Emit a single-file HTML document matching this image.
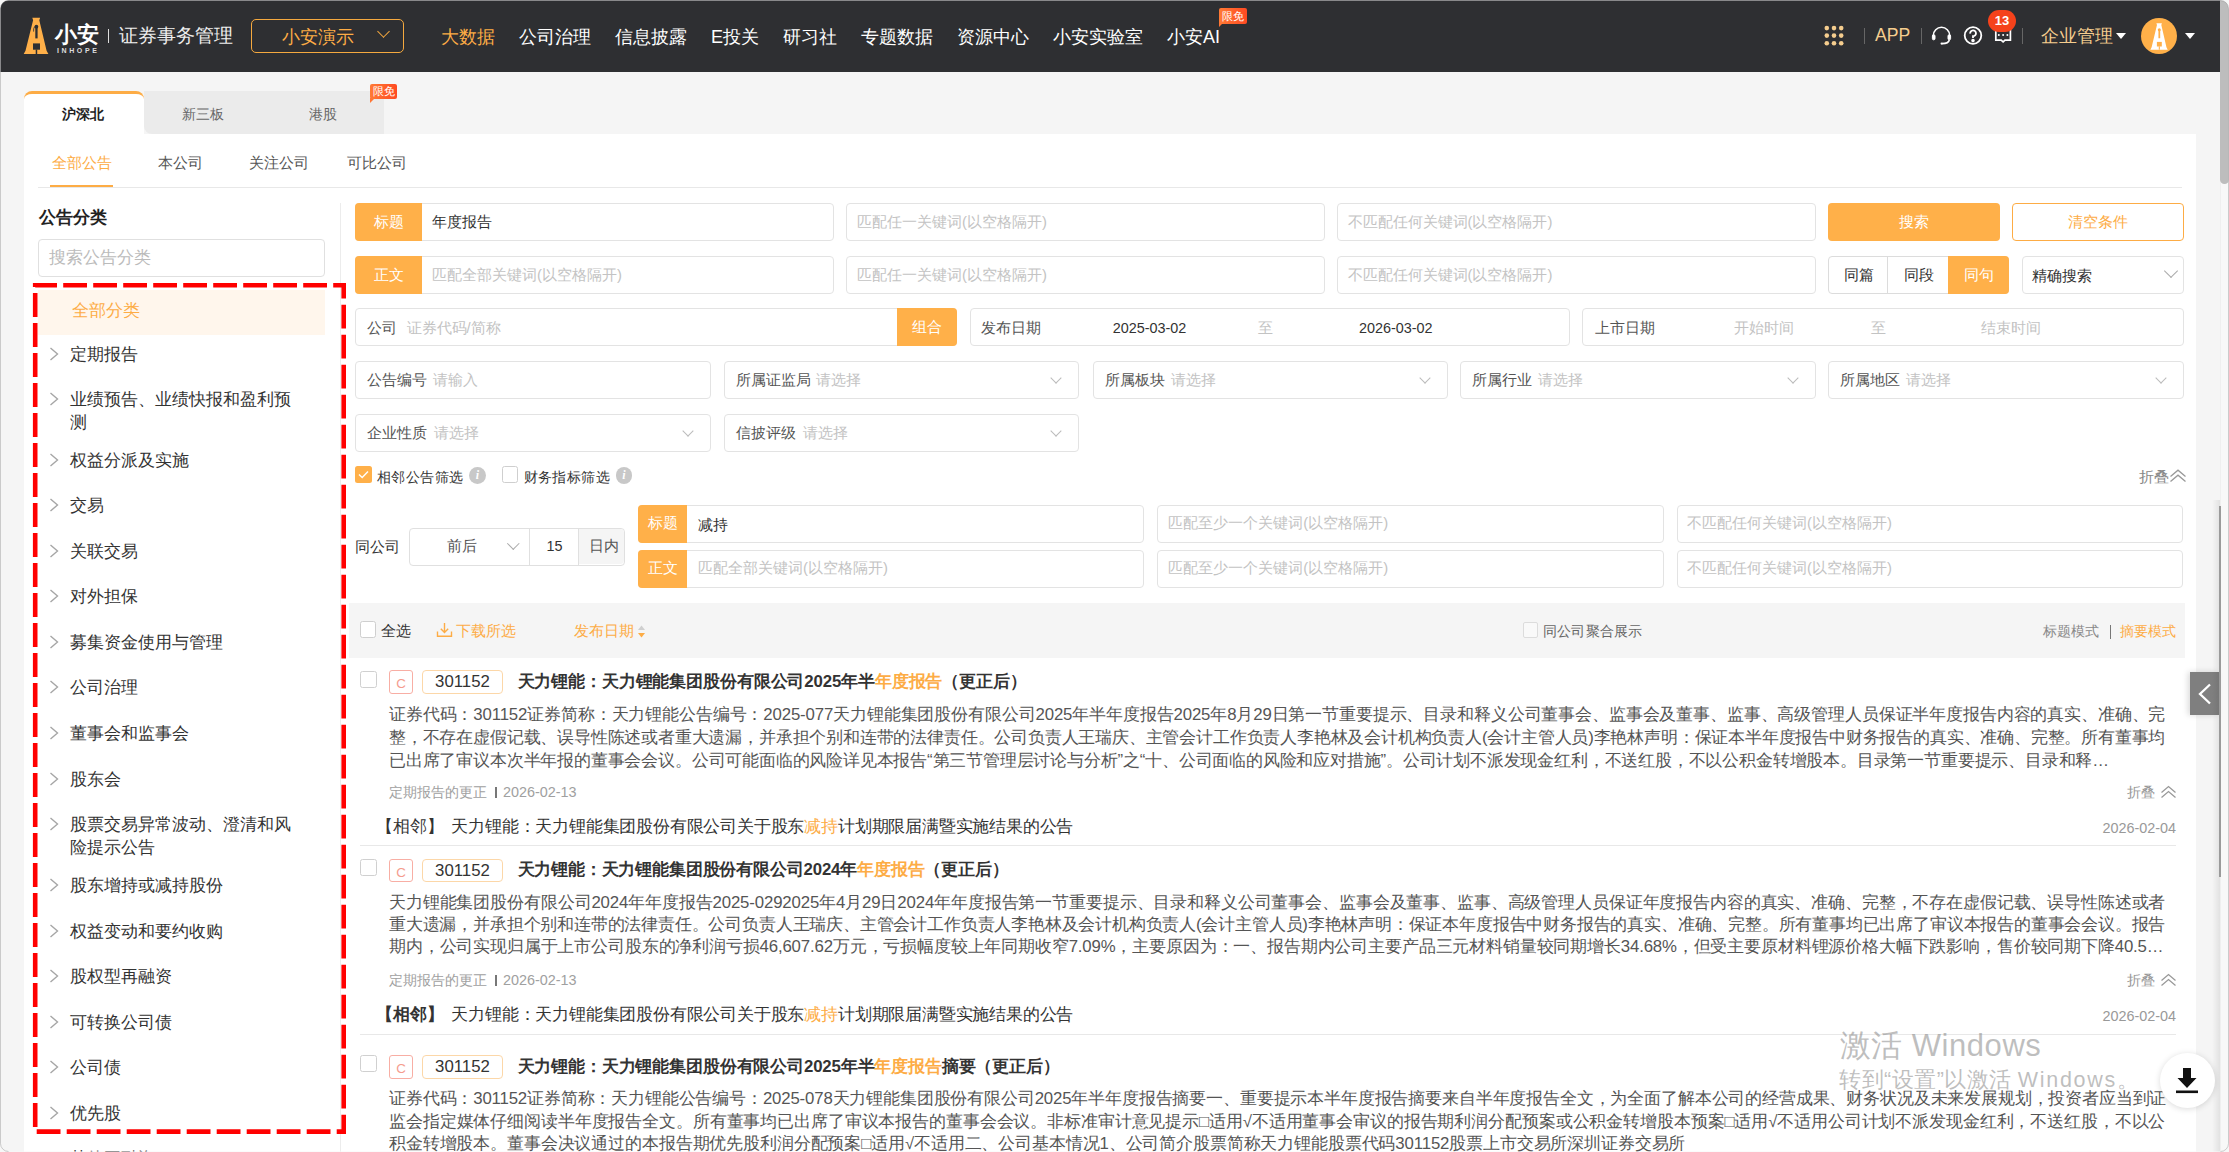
<!DOCTYPE html>
<html><head><meta charset="utf-8"><title>小安</title>
<style>
*{box-sizing:border-box;margin:0;padding:0}
html,body{width:2229px;height:1152px;overflow:hidden}
body{position:relative;background:#f5f5f5;font-family:"Liberation Sans",sans-serif;color:#333}
.a{position:absolute;white-space:nowrap}
.hdr{left:0;top:0;width:2220px;height:72px;background:#2e2f32}
.nav{top:22.5px;font-size:18px;line-height:28px;color:#fff}
.sep{width:1px;height:16px;background:#666;top:28px}
.panel{left:24px;top:134px;width:2172px;height:1018px;background:#fff}
.box{border:1px solid #e3e3e3;border-radius:4px;background:#fff}
.ph{color:#c3c3c3}
.lbl{color:#555}
.f14{font-size:14.8px;line-height:20px}
.f17{font-size:16.8px;line-height:23px}
.org{color:#fdac45}
.obg{background:#ffb049;color:#fff}
.chev{width:8px;height:8px;border-right:1.3px solid #aaa;border-bottom:1.3px solid #aaa;transform:rotate(-45deg)}
.dchev{width:8px;height:8px;border-right:1.2px solid #bbb;border-bottom:1.2px solid #bbb;transform:rotate(45deg)}
.tr{color:#333;font-size:16.8px;line-height:23px}
.tri{width:0;height:0;border-left:5px solid transparent;border-right:5px solid transparent;border-top:6px solid #fff}
</style></head><body>
<!-- HEADER -->
<div class="a hdr"></div>
<!-- logo -->
<svg class="a" style="left:20px;top:14px" width="32" height="44" viewBox="0 0 32 44">
<path d="M12.3 3.8 L20.1 3.8 L19.3 6.2 L26.6 36.8 L28.4 40 L3.7 40 L5.5 36.8 L13.1 6.2 Z" fill="#ffb049"/>
<circle cx="16.4" cy="12.7" r="1.9" fill="#2e2f32"/>
<rect x="15.3" y="13" width="2.3" height="11.4" fill="#2e2f32"/>
<path d="M14.6 12.6 Q13.3 14.5 13.6 17.6" stroke="#2e2f32" stroke-width="0.8" fill="none"/>
<rect x="13" y="29.4" width="7" height="6.3" fill="#2e2f32"/>
<rect x="15.7" y="35.5" width="1.5" height="4.6" fill="#2e2f32"/>
</svg>
<div class="a" style="left:54.5px;top:20.5px;font-size:22px;line-height:28px;font-weight:bold;color:#fff">小安</div>
<div class="a" style="left:57px;top:46px;font-size:7px;line-height:9px;font-weight:bold;color:#ddd;letter-spacing:2.6px">INHOPE</div>
<div class="a" style="left:108px;top:29px;width:1px;height:14px;background:#ddd"></div>
<div class="a" style="left:118.5px;top:22px;font-size:19.2px;line-height:28px;color:#eee">证券事务管理</div>
<div class="a" style="left:251px;top:19px;width:153px;height:34px;border:1.5px solid #f5a93f;border-radius:5px"></div>
<div class="a org" style="left:281.5px;top:23px;font-size:18px;line-height:28px">小安演示</div>
<div class="a" style="left:379px;top:27px;width:9px;height:9px;border-right:1.5px solid #f5a93f;border-bottom:1.5px solid #f5a93f;transform:rotate(45deg)"></div>
<div class="a nav org" style="left:441px">大数据</div>
<div class="a nav" style="left:519px">公司治理</div>
<div class="a nav" style="left:615px">信息披露</div>
<div class="a nav" style="left:711px">E投关</div>
<div class="a nav" style="left:783px">研习社</div>
<div class="a nav" style="left:861px">专题数据</div>
<div class="a nav" style="left:957px">资源中心</div>
<div class="a nav" style="left:1053px">小安实验室</div>
<div class="a nav" style="left:1167px">小安AI</div>
<div class="a" style="left:1219px;top:8px;width:28px;height:16px;background:linear-gradient(90deg,#ff7a35,#ff4a22);border-radius:2px;color:#fff;font-size:11px;line-height:16px;text-align:center">限免</div>
<div class="a" style="left:1219px;top:22px;width:0;height:0;border-left:5px solid #ff7635;border-bottom:5px solid transparent"></div>
<!-- right header -->
<svg class="a" style="left:1822px;top:24px" width="24" height="24" viewBox="0 0 24 24" fill="#f5cd8e">
<circle cx="4.8" cy="4.1" r="2.3"/><circle cx="12" cy="4.1" r="2.3"/><circle cx="19.2" cy="4.1" r="2.3"/>
<circle cx="4.8" cy="11.6" r="2.3"/><circle cx="12" cy="11.6" r="2.3"/><circle cx="19.2" cy="11.6" r="2.3"/>
<circle cx="4.8" cy="19.2" r="2.3"/><circle cx="12" cy="19.2" r="2.3"/><circle cx="19.2" cy="19.2" r="2.3"/>
</svg>
<div class="a sep" style="left:1864px"></div>
<div class="a" style="left:1875px;top:24px;font-size:17.6px;line-height:22px;color:#f5cd8e">APP</div>
<div class="a sep" style="left:1921px"></div>
<svg class="a" style="left:1930px;top:25px" width="24" height="22" viewBox="0 0 24 22" fill="none" stroke="#fff" stroke-width="1.6">
<path d="M3.3 11 V10.5 A8.2 8.2 0 0 1 19.7 10.5 V11"/><rect x="2.4" y="9.8" width="2.6" height="5" rx="1.2" fill="#fff" stroke-width="1"/><rect x="18" y="9.8" width="2.6" height="5" rx="1.2" fill="#fff" stroke-width="1"/><path d="M19.3 15 Q18.6 18.6 12 18.6"/><circle cx="11.6" cy="18.6" r="1.1" fill="#fff" stroke="none"/>
</svg>
<svg class="a" style="left:1963px;top:26px" width="20" height="20" viewBox="0 0 20 20" fill="none" stroke="#fff" stroke-width="1.8">
<circle cx="10" cy="9.5" r="8.3"/><path d="M7.2 7.6 A2.9 2.9 0 1 1 10 10.2 V12"/><circle cx="10" cy="14.6" r="0.9" fill="#fff"/>
</svg>
<svg class="a" style="left:1994px;top:26px" width="19" height="19" viewBox="0 0 19 19" fill="none" stroke="#fff" stroke-width="1.7">
<path d="M1.8 2.5 H16.4 V14.2 H11 L9.1 15.9 L7.2 14.2 H1.8 Z"/><circle cx="4.8" cy="9" r="1" fill="#fff" stroke="none"/><circle cx="9.1" cy="9" r="1" fill="#fff" stroke="none"/><circle cx="13.4" cy="9" r="1" fill="#fff" stroke="none"/>
</svg>
<div class="a" style="left:1988px;top:10px;width:28px;height:22px;border-radius:11px;background:#f5421b;color:#fff;font-size:13px;font-weight:bold;line-height:22px;text-align:center">13</div>
<div class="a sep" style="left:2022px"></div>
<div class="a" style="left:2041px;top:21.5px;font-size:18px;line-height:28px;color:#f5cd8e">企业管理</div>
<div class="a tri" style="left:2116px;top:33px"></div>
<div class="a" style="left:2141px;top:18px;width:36px;height:36px;border-radius:50%;background:#ffb049"></div>
<svg class="a" style="left:2150px;top:23px" width="18" height="27" viewBox="3.2 3.5 25.6 37" preserveAspectRatio="none">
<path d="M12.3 3.8 L20.1 3.8 L19.3 6.2 L26.6 36.8 L28.4 40 L3.7 40 L5.5 36.8 L13.1 6.2 Z" fill="#fff"/>
<circle cx="16.4" cy="12.7" r="2.1" fill="#ffb049"/>
<rect x="15.2" y="13" width="2.5" height="11.4" fill="#ffb049"/>
<rect x="13" y="29.4" width="7" height="6.3" fill="#ffb049"/>
<rect x="15.7" y="35.5" width="1.5" height="4.6" fill="#ffb049"/>
</svg>
<div class="a tri" style="left:2185px;top:33px"></div>
<!-- scrollbar -->
<div class="a" style="left:2220px;top:0;width:9px;height:1152px;background:#f8f8f8;border-left:1px solid #efefef"></div>
<div class="a" style="left:2220px;top:0;width:9px;height:184px;background:#bdbdbd;border-radius:0 0 5px 5px"></div>

<!-- TABS -->
<div class="a" style="left:144px;top:91px;width:240px;height:43px;background:#ebebeb;border-radius:0 8px 0 8px"></div>
<div class="a" style="left:24px;top:91px;width:120px;height:44px;background:#fff;border-top:3px solid #fdac45;border-radius:8px 8px 0 0"></div>
<div class="a" style="left:62px;top:103px;font-size:14.4px;line-height:22px;font-weight:bold;color:#222">沪深北</div>
<div class="a" style="left:182px;top:103px;font-size:14.4px;line-height:22px;color:#666">新三板</div>
<div class="a" style="left:309px;top:103px;font-size:14.4px;line-height:22px;color:#666">港股</div>
<div class="a" style="left:370px;top:84px;width:27px;height:15px;background:linear-gradient(90deg,#ff7a35,#ff4a22);border-radius:2px;color:#fff;font-size:11px;line-height:15px;text-align:center">限免</div>
<div class="a" style="left:370px;top:98px;width:0;height:0;border-left:5px solid #ff7635;border-bottom:5px solid transparent"></div>

<div class="a panel"></div>
<!-- sub tabs -->
<div class="a org" style="left:52px;top:153px;font-size:15.3px;line-height:20px">全部公告</div>
<div class="a" style="left:158px;top:153px;font-size:15.3px;line-height:20px;color:#555">本公司</div>
<div class="a" style="left:249px;top:153px;font-size:15.3px;line-height:20px;color:#555">关注公司</div>
<div class="a" style="left:347px;top:153px;font-size:15.3px;line-height:20px;color:#555">可比公司</div>
<div class="a" style="left:38px;top:187px;width:2144px;height:1px;background:#e8e8e8"></div>
<div class="a" style="left:50px;top:185px;width:63px;height:2.4px;background:#fdac45"></div>

<!--SIDEBAR-->
<div class="a" style="left:340px;top:203px;width:1px;height:949px;background:#ececec"></div>
<div class="a" style="left:39px;top:204px;font-size:16.8px;line-height:28px;font-weight:bold;color:#222">公告分类</div>
<div class="a box" style="left:38px;top:239px;width:287px;height:38px;border-color:#e0e0e0"></div>
<div class="a" style="left:49px;top:245px;font-size:16.8px;line-height:26px;color:#bbb">搜索公告分类</div>
<div class="a" style="left:38px;top:290px;width:287px;height:45px;background:#fff6ec"></div>
<div class="a org" style="left:72px;top:297px;font-size:16.8px;line-height:28px">全部分类</div>
<svg class="a" style="left:48px;top:346.2px" width="12" height="16" viewBox="0 0 12 16"><path d="M2.5 2 L9.5 8 L2.5 14" fill="none" stroke="#a6a6a6" stroke-width="1.4"/></svg>
<div class="a tr" style="left:70px;top:341.2px;line-height:28px">定期报告</div>
<svg class="a" style="left:48px;top:391.4px" width="12" height="16" viewBox="0 0 12 16"><path d="M2.5 2 L9.5 8 L2.5 14" fill="none" stroke="#a6a6a6" stroke-width="1.4"/></svg>
<div class="a tr" style="left:70px;top:386.4px;line-height:28px">业绩预告、业绩快报和盈利预</div>
<div class="a tr" style="left:70px;top:409.4px;line-height:28px">测</div>
<svg class="a" style="left:48px;top:451.7px" width="12" height="16" viewBox="0 0 12 16"><path d="M2.5 2 L9.5 8 L2.5 14" fill="none" stroke="#a6a6a6" stroke-width="1.4"/></svg>
<div class="a tr" style="left:70px;top:446.7px;line-height:28px">权益分派及实施</div>
<svg class="a" style="left:48px;top:497.0px" width="12" height="16" viewBox="0 0 12 16"><path d="M2.5 2 L9.5 8 L2.5 14" fill="none" stroke="#a6a6a6" stroke-width="1.4"/></svg>
<div class="a tr" style="left:70px;top:492.0px;line-height:28px">交易</div>
<svg class="a" style="left:48px;top:542.8px" width="12" height="16" viewBox="0 0 12 16"><path d="M2.5 2 L9.5 8 L2.5 14" fill="none" stroke="#a6a6a6" stroke-width="1.4"/></svg>
<div class="a tr" style="left:70px;top:537.8px;line-height:28px">关联交易</div>
<svg class="a" style="left:48px;top:588.1px" width="12" height="16" viewBox="0 0 12 16"><path d="M2.5 2 L9.5 8 L2.5 14" fill="none" stroke="#a6a6a6" stroke-width="1.4"/></svg>
<div class="a tr" style="left:70px;top:583.1px;line-height:28px">对外担保</div>
<svg class="a" style="left:48px;top:633.7px" width="12" height="16" viewBox="0 0 12 16"><path d="M2.5 2 L9.5 8 L2.5 14" fill="none" stroke="#a6a6a6" stroke-width="1.4"/></svg>
<div class="a tr" style="left:70px;top:628.7px;line-height:28px">募集资金使用与管理</div>
<svg class="a" style="left:48px;top:679.0px" width="12" height="16" viewBox="0 0 12 16"><path d="M2.5 2 L9.5 8 L2.5 14" fill="none" stroke="#a6a6a6" stroke-width="1.4"/></svg>
<div class="a tr" style="left:70px;top:674.0px;line-height:28px">公司治理</div>
<svg class="a" style="left:48px;top:724.8px" width="12" height="16" viewBox="0 0 12 16"><path d="M2.5 2 L9.5 8 L2.5 14" fill="none" stroke="#a6a6a6" stroke-width="1.4"/></svg>
<div class="a tr" style="left:70px;top:719.8px;line-height:28px">董事会和监事会</div>
<svg class="a" style="left:48px;top:770.6px" width="12" height="16" viewBox="0 0 12 16"><path d="M2.5 2 L9.5 8 L2.5 14" fill="none" stroke="#a6a6a6" stroke-width="1.4"/></svg>
<div class="a tr" style="left:70px;top:765.6px;line-height:28px">股东会</div>
<svg class="a" style="left:48px;top:816.3px" width="12" height="16" viewBox="0 0 12 16"><path d="M2.5 2 L9.5 8 L2.5 14" fill="none" stroke="#a6a6a6" stroke-width="1.4"/></svg>
<div class="a tr" style="left:70px;top:811.3px;line-height:28px">股票交易异常波动、澄清和风</div>
<div class="a tr" style="left:70px;top:834.3px;line-height:28px">险提示公告</div>
<svg class="a" style="left:48px;top:877.0px" width="12" height="16" viewBox="0 0 12 16"><path d="M2.5 2 L9.5 8 L2.5 14" fill="none" stroke="#a6a6a6" stroke-width="1.4"/></svg>
<div class="a tr" style="left:70px;top:872.0px;line-height:28px">股东增持或减持股份</div>
<svg class="a" style="left:48px;top:922.6px" width="12" height="16" viewBox="0 0 12 16"><path d="M2.5 2 L9.5 8 L2.5 14" fill="none" stroke="#a6a6a6" stroke-width="1.4"/></svg>
<div class="a tr" style="left:70px;top:917.6px;line-height:28px">权益变动和要约收购</div>
<svg class="a" style="left:48px;top:968.2px" width="12" height="16" viewBox="0 0 12 16"><path d="M2.5 2 L9.5 8 L2.5 14" fill="none" stroke="#a6a6a6" stroke-width="1.4"/></svg>
<div class="a tr" style="left:70px;top:963.2px;line-height:28px">股权型再融资</div>
<svg class="a" style="left:48px;top:1013.8px" width="12" height="16" viewBox="0 0 12 16"><path d="M2.5 2 L9.5 8 L2.5 14" fill="none" stroke="#a6a6a6" stroke-width="1.4"/></svg>
<div class="a tr" style="left:70px;top:1008.8px;line-height:28px">可转换公司债</div>
<svg class="a" style="left:48px;top:1059.4px" width="12" height="16" viewBox="0 0 12 16"><path d="M2.5 2 L9.5 8 L2.5 14" fill="none" stroke="#a6a6a6" stroke-width="1.4"/></svg>
<div class="a tr" style="left:70px;top:1054.4px;line-height:28px">公司债</div>
<svg class="a" style="left:48px;top:1105.0px" width="12" height="16" viewBox="0 0 12 16"><path d="M2.5 2 L9.5 8 L2.5 14" fill="none" stroke="#a6a6a6" stroke-width="1.4"/></svg>
<div class="a tr" style="left:70px;top:1100.0px;line-height:28px">优先股</div>
<svg class="a" style="left:48px;top:1150.6px" width="12" height="16" viewBox="0 0 12 16"><path d="M2.5 2 L9.5 8 L2.5 14" fill="none" stroke="#a6a6a6" stroke-width="1.4"/></svg>
<div class="a tr" style="left:70px;top:1144.6px;line-height:28px">其他再融资</div>
<svg class="a" style="left:0;top:0" width="400" height="1152"><rect x="35.2" y="285.3" width="308.5" height="846.3" fill="none" stroke="#f00" stroke-width="4.6" stroke-dasharray="23.8 6.2" stroke-dashoffset="2"/></svg>
<!--MAIN-->
<div class="a box" style="left:355px;top:203px;width:478.5px;height:38px;"></div>
<div class="a obg f14" style="left:355px;top:203px;width:67px;height:38px;line-height:38px;text-align:center;border-radius:4px 0 0 4px">标题</div>
<div class="a f14" style="left:432px;top:203px;line-height:38px;color:#333">年度报告</div>
<div class="a box" style="left:846px;top:203px;width:478.5px;height:38px;"></div>
<div class="a f14 ph" style="left:857px;top:203px;line-height:38px;">匹配任一关键词(以空格隔开)</div>
<div class="a box" style="left:1337px;top:203px;width:478.5px;height:38px;"></div>
<div class="a f14 ph" style="left:1347.5px;top:203px;line-height:38px;">不匹配任何关键词(以空格隔开)</div>
<div class="a obg f14" style="left:1828px;top:203px;width:172px;height:38px;line-height:38px;text-align:center;border-radius:4px">搜索</div>
<div class="a org f14" style="left:2012px;top:203px;width:172px;height:38px;line-height:36px;text-align:center;border-radius:4px;border:1px solid #fdac45;background:#fff">清空条件</div>
<div class="a box" style="left:355px;top:255.6px;width:478.5px;height:38px;"></div>
<div class="a obg f14" style="left:355px;top:255.6px;width:67px;height:38px;line-height:38px;text-align:center;border-radius:4px 0 0 4px">正文</div>
<div class="a f14 ph" style="left:432px;top:255.6px;line-height:38px;">匹配全部关键词(以空格隔开)</div>
<div class="a box" style="left:846px;top:255.6px;width:478.5px;height:38px;"></div>
<div class="a f14 ph" style="left:857px;top:255.6px;line-height:38px;">匹配任一关键词(以空格隔开)</div>
<div class="a box" style="left:1337px;top:255.6px;width:478.5px;height:38px;"></div>
<div class="a f14 ph" style="left:1347.5px;top:255.6px;line-height:38px;">不匹配任何关键词(以空格隔开)</div>
<div class="a box" style="left:1828px;top:255.6px;width:180.6px;height:38px;border-color:#dcdcdc"></div>
<div class="a" style="left:1887.4px;top:255.6px;width:1px;height:38px;background:#dcdcdc"></div>
<div class="a obg" style="left:1948px;top:255.6px;width:60.6px;height:38px;border-radius:0 4px 4px 0"></div>
<div class="a f14" style="left:1843.8px;top:255.6px;line-height:38px;color:#333">同篇</div>
<div class="a f14" style="left:1903.8px;top:255.6px;line-height:38px;color:#333">同段</div>
<div class="a f14" style="left:1963.6px;top:255.6px;line-height:38px;color:#fff">同句</div>
<div class="a box" style="left:2021.5px;top:255.6px;width:162.2px;height:38px;"></div>
<div class="a f14" style="left:2031.6px;top:256.6px;line-height:38px;color:#333">精确搜索</div>
<div class="a" style="left:2166px;top:265.6px;width:10px;height:10px;border-right:1.3px solid #aaa;border-bottom:1.3px solid #aaa;transform:rotate(45deg)"></div>
<div class="a box" style="left:355px;top:308.4px;width:602px;height:38px;"></div>
<div class="a f14 lbl" style="left:367px;top:309.2px;line-height:38px;">公司</div>
<div class="a f14 ph" style="left:406.5px;top:309.2px;line-height:38px;">证券代码/简称</div>
<div class="a obg f14" style="left:897px;top:308.4px;width:60px;height:38px;line-height:38px;text-align:center;border-radius:0 4px 4px 0">组合</div>
<div class="a box" style="left:969.5px;top:308.4px;width:600px;height:38px;"></div>
<div class="a f14 lbl" style="left:980.7px;top:309.2px;line-height:38px;">发布日期</div>
<div class="a f14" style="left:1112.7px;top:309.2px;line-height:38px;color:#333;font-size:14.4px">2025-03-02</div>
<div class="a f14 ph" style="left:1257.7px;top:309.2px;line-height:38px;">至</div>
<div class="a f14" style="left:1359px;top:309.2px;line-height:38px;color:#333;font-size:14.4px">2026-03-02</div>
<div class="a box" style="left:1582px;top:308.4px;width:601.7px;height:38px;"></div>
<div class="a f14 lbl" style="left:1594.8px;top:309.2px;line-height:38px;">上市日期</div>
<div class="a f14 ph" style="left:1734px;top:309.2px;line-height:38px;">开始时间</div>
<div class="a f14 ph" style="left:1871px;top:309.2px;line-height:38px;">至</div>
<div class="a f14 ph" style="left:1980.5px;top:309.2px;line-height:38px;">结束时间</div>
<div class="a box" style="left:355px;top:361.2px;width:355.7px;height:38px;"></div>
<div class="a f14 lbl" style="left:367px;top:361.2px;line-height:38px;">公告编号</div>
<div class="a f14 ph" style="left:433.0px;top:361.2px;line-height:38px;">请输入</div>
<div class="a box" style="left:723.6px;top:361.2px;width:355.7px;height:38px;"></div>
<div class="a f14 lbl" style="left:735.6px;top:361.2px;line-height:38px;">所属证监局</div>
<div class="a f14 ph" style="left:816.0px;top:361.2px;line-height:38px;">请选择</div>
<div class="a dchev" style="left:1052.1px;top:373.7px"></div>
<div class="a box" style="left:1092.6px;top:361.2px;width:355.7px;height:38px;"></div>
<div class="a f14 lbl" style="left:1104.6px;top:361.2px;line-height:38px;">所属板块</div>
<div class="a f14 ph" style="left:1170.6px;top:361.2px;line-height:38px;">请选择</div>
<div class="a dchev" style="left:1421.1px;top:373.7px"></div>
<div class="a box" style="left:1460.2px;top:361.2px;width:355.7px;height:38px;"></div>
<div class="a f14 lbl" style="left:1472.2px;top:361.2px;line-height:38px;">所属行业</div>
<div class="a f14 ph" style="left:1538.2px;top:361.2px;line-height:38px;">请选择</div>
<div class="a dchev" style="left:1788.7px;top:373.7px"></div>
<div class="a box" style="left:1828px;top:361.2px;width:355.7px;height:38px;"></div>
<div class="a f14 lbl" style="left:1840px;top:361.2px;line-height:38px;">所属地区</div>
<div class="a f14 ph" style="left:1906.0px;top:361.2px;line-height:38px;">请选择</div>
<div class="a dchev" style="left:2156.5px;top:373.7px"></div>
<div class="a box" style="left:355px;top:414px;width:355.7px;height:38px;"></div>
<div class="a f14 lbl" style="left:367px;top:414px;line-height:38px;">企业性质</div>
<div class="a f14 ph" style="left:434.0px;top:414px;line-height:38px;">请选择</div>
<div class="a dchev" style="left:683.5px;top:426.5px"></div>
<div class="a box" style="left:723.6px;top:414px;width:355.7px;height:38px;"></div>
<div class="a f14 lbl" style="left:735.6px;top:414px;line-height:38px;">信披评级</div>
<div class="a f14 ph" style="left:802.6px;top:414px;line-height:38px;">请选择</div>
<div class="a dchev" style="left:1052.1px;top:426.5px"></div>
<div class="a obg" style="left:355px;top:466px;width:16.8px;height:16.8px;border-radius:2.5px"></div>
<svg class="a" style="left:355px;top:466px" width="17" height="17" viewBox="0 0 17 17"><path d="M4 8.6 L7.2 11.6 L13 5.6" fill="none" stroke="#fff" stroke-width="1.4"/></svg>
<div class="a f14" style="left:377px;top:466.5px;line-height:20px;color:#333;font-size:14.4px;letter-spacing:0.45px">相邻公告筛选</div>
<div class="a" style="left:469px;top:467px;width:16.8px;height:16.8px;border-radius:50%;background:#c8c8c8;color:#fff;font:italic bold 12px/17px 'Liberation Serif',serif;text-align:center">i</div>
<div class="a box" style="left:502px;top:466px;width:16px;height:16.8px;border-color:#cfcfcf;border-radius:2.5px"></div>
<div class="a f14" style="left:523.6px;top:466.5px;line-height:20px;color:#333;font-size:14.4px;letter-spacing:0.45px">财务指标筛选</div>
<div class="a" style="left:615.5px;top:467px;width:16.8px;height:16.8px;border-radius:50%;background:#c8c8c8;color:#fff;font:italic bold 12px/17px 'Liberation Serif',serif;text-align:center">i</div>
<div class="a f14" style="left:2139px;top:467px;line-height:20px;color:#888;font-size:14.8px">折叠</div>
<svg class="a" style="left:2169px;top:469px" width="18" height="14" viewBox="0 0 18 14" fill="none" stroke="#999" stroke-width="1.3"><path d="M1.5 7.5 L9 1.2 L16.5 7.5"/><path d="M1.5 12.5 L9 6.2 L16.5 12.5"/></svg>
<div class="a f14" style="left:355px;top:537px;line-height:20px;color:#333">同公司</div>
<div class="a box" style="left:408.6px;top:528.4px;width:216.6px;height:37.5px;border-color:#e0e0e0"></div>
<div class="a" style="left:578px;top:529.4px;width:46.2px;height:35px;background:#f5f5f5;border-radius:0 4px 4px 0"></div>
<div class="a" style="left:529px;top:528.4px;width:1px;height:37px;background:#e0e0e0"></div>
<div class="a" style="left:578px;top:528.4px;width:1px;height:37px;background:#e0e0e0"></div>
<div class="a f14" style="left:447.4px;top:528.4px;line-height:37px;color:#555">前后</div>
<div class="a" style="left:509px;top:538.5px;width:8.5px;height:8.5px;border-right:1.3px solid #aaa;border-bottom:1.3px solid #aaa;transform:rotate(45deg)"></div>
<div class="a f14" style="left:546.5px;top:528.4px;line-height:37px;color:#333;font-size:14.4px">15</div>
<div class="a f14" style="left:588.7px;top:528.4px;line-height:37px;color:#555">日内</div>
<div class="a box" style="left:638.4px;top:505.3px;width:506px;height:37.5px;"></div>
<div class="a obg f14" style="left:638.4px;top:505.3px;width:49px;height:37.5px;line-height:37.5px;text-align:center;border-radius:4px 0 0 4px">标题</div>
<div class="a f14" style="left:698px;top:507.3px;line-height:37.5px;color:#333">减持</div>
<div class="a box" style="left:1157.1px;top:505.3px;width:507px;height:37.5px;"></div>
<div class="a f14 ph" style="left:1168.3px;top:505.3px;line-height:37.5px;">匹配至少一个关键词(以空格隔开)</div>
<div class="a box" style="left:1677.4px;top:505.3px;width:506px;height:37.5px;"></div>
<div class="a f14 ph" style="left:1687.1px;top:505.3px;line-height:37.5px;">不匹配任何关键词(以空格隔开)</div>
<div class="a box" style="left:638.4px;top:550.4px;width:506px;height:37.5px;"></div>
<div class="a obg f14" style="left:638.4px;top:550.4px;width:49px;height:37.5px;line-height:37.5px;text-align:center;border-radius:4px 0 0 4px">正文</div>
<div class="a f14 ph" style="left:698px;top:550.4px;line-height:37.5px;">匹配全部关键词(以空格隔开)</div>
<div class="a box" style="left:1157.1px;top:550.4px;width:507px;height:37.5px;"></div>
<div class="a f14 ph" style="left:1168.3px;top:550.4px;line-height:37.5px;">匹配至少一个关键词(以空格隔开)</div>
<div class="a box" style="left:1677.4px;top:550.4px;width:506px;height:37.5px;"></div>
<div class="a f14 ph" style="left:1687.1px;top:550.4px;line-height:37.5px;">不匹配任何关键词(以空格隔开)</div>
<div class="a" style="left:349.4px;top:602.8px;width:1836px;height:55.6px;background:#f5f5f5"></div>
<div class="a box" style="left:359.6px;top:621.4px;width:16.8px;height:16.8px;border-color:#cfcfcf;border-radius:2.5px"></div>
<div class="a f14" style="left:381.4px;top:621px;line-height:20px;color:#333">全选</div>
<svg class="a" style="left:436px;top:621px" width="17" height="17" viewBox="0 0 17 17" fill="none" stroke="#fdac45" stroke-width="1.4"><path d="M8.5 2 V11.5 M4.8 7.8 L8.5 11.5 L12.2 7.8 M1.5 10.5 V15.2 H15.5 V10.5"/></svg>
<div class="a f14 org" style="left:456px;top:621px;line-height:20px;">下载所选</div>
<div class="a f14 org" style="left:574.4px;top:621px;line-height:20px;">发布日期</div>
<svg class="a" style="left:637px;top:623.5px" width="9" height="15" viewBox="0 0 9 15"><path d="M1 6 L4.5 1.5 L8 6Z" fill="#cfcfcf"/><path d="M1 9 L4.5 13.5 L8 9Z" fill="#fdac45"/></svg>
<div class="a box" style="left:1522.5px;top:622px;width:15.5px;height:16px;border-color:#dcdcdc;background:#f9f9f9;border-radius:2px"></div>
<div class="a f14" style="left:1543px;top:621px;line-height:20px;color:#666;font-size:14.4px;letter-spacing:0.2px">同公司聚合展示</div>
<div class="a f14" style="left:2042.8px;top:620.5px;line-height:20px;color:#888;font-size:14.4px">标题模式</div>
<div class="a" style="left:2109.5px;top:624.5px;width:1.4px;height:14px;background:#777"></div>
<div class="a f14 org" style="left:2119.5px;top:620.5px;line-height:20px;font-size:14.4px">摘要模式</div>
<!--LIST-->
<div class="a box" style="left:360px;top:671.2px;width:16.6px;height:16.6px;border-color:#d0d0d0;border-radius:2.5px"></div>
<div class="a" style="left:389.3px;top:670.0px;width:23.4px;height:23.6px;border:1px solid #f8aea4;border-radius:3px;color:#f59c8e;font-size:13.4px;line-height:25px;text-align:center">C</div>
<div class="a" style="left:422.3px;top:670.0px;width:80.4px;height:23.6px;border:1px solid #fcd7a8;border-radius:4px;color:#333;font-size:16.8px;line-height:22px;text-align:center">301152</div>
<div class="a tt" style="left:517.5px;top:668.0px;font-size:16.8px;line-height:28px;font-weight:bold;color:#333;letter-spacing:-0.13px">天力锂能：天力锂能集团股份有限公司2025年半<span class="org">年度报告</span>（更正后）</div>
<div class="a bl" style="left:389px;top:701.0px;font-size:16.8px;line-height:28px;color:#555;letter-spacing:-0.1366px">证券代码：301152证券简称：天力锂能公告编号：2025-077天力锂能集团股份有限公司2025年半年度报告2025年8月29日第一节重要提示、目录和释义公司董事会、监事会及董事、监事、高级管理人员保证半年度报告内容的真实、准确、完</div>
<div class="a bl" style="left:389px;top:723.9px;font-size:16.8px;line-height:28px;color:#555;letter-spacing:-0.1857px">整，不存在虚假记载、误导性陈述或者重大遗漏，并承担个别和连带的法律责任。公司负责人王瑞庆、主管会计工作负责人李艳林及会计机构负责人(会计主管人员)李艳林声明：保证本半年度报告中财务报告的真实、准确、完整。所有董事均</div>
<div class="a bl" style="left:389px;top:746.9px;font-size:16.8px;line-height:28px;color:#555;letter-spacing:-0.1840px">已出席了审议本次半年报的董事会会议。公司可能面临的风险详见本报告“第三节管理层讨论与分析”之“十、公司面临的风险和应对措施”。公司计划不派发现金红利，不送红股，不以公积金转增股本。目录第一节重要提示、目录和释…</div>
<div class="a" style="left:389px;top:782.3px;font-size:14.4px;line-height:20px;color:#a0a0a0">定期报告的更正<span style="display:inline-block;width:2px;height:11px;background:#777;margin:0 6px 0 8px;vertical-align:-1px"></span>2026-02-13</div>
<div class="a" style="left:2127px;top:782.3px;font-size:14.4px;line-height:20px;color:#999">折叠</div>
<svg class="a" style="left:2160px;top:785.3px" width="17" height="14" viewBox="0 0 17 14" fill="none" stroke="#999" stroke-width="1.3"><path d="M1.5 7.5 L8.5 1.5 L15.5 7.5"/><path d="M1.5 12.5 L8.5 6.5 L15.5 12.5"/></svg>
<div class="a adj" style="left:376.3px;top:812.8px;font-size:16.8px;line-height:28px;color:#333">【相邻】<span style="margin-left:7px;letter-spacing:-0.19px">天力锂能：天力锂能集团股份有限公司关于股东<span class="org">减持</span>计划期限届满暨实施结果的公告</span></div>
<div class="a" style="left:2076px;top:817.8px;width:100px;text-align:right;font-size:14.4px;line-height:20px;color:#999">2026-02-04</div>
<div class="a" style="left:360px;top:845.2px;width:1816px;height:1px;background:#e8e8e8"></div>
<div class="a box" style="left:360px;top:859.1px;width:16.6px;height:16.6px;border-color:#d0d0d0;border-radius:2.5px"></div>
<div class="a" style="left:389.3px;top:858.5px;width:23.4px;height:23.6px;border:1px solid #f8aea4;border-radius:3px;color:#f59c8e;font-size:13.4px;line-height:25px;text-align:center">C</div>
<div class="a" style="left:422.3px;top:858.5px;width:80.4px;height:23.6px;border:1px solid #fcd7a8;border-radius:4px;color:#333;font-size:16.8px;line-height:22px;text-align:center">301152</div>
<div class="a tt" style="left:517.5px;top:855.8px;font-size:16.8px;line-height:28px;font-weight:bold;color:#333;letter-spacing:-0.17px">天力锂能：天力锂能集团股份有限公司2024年<span class="org">年度报告</span>（更正后）</div>
<div class="a bl" style="left:389px;top:888.8px;font-size:16.8px;line-height:28px;color:#555;letter-spacing:-0.1341px">天力锂能集团股份有限公司2024年年度报告2025-0292025年4月29日2024年年度报告第一节重要提示、目录和释义公司董事会、监事会及董事、监事、高级管理人员保证年度报告内容的真实、准确、完整，不存在虚假记载、误导性陈述或者</div>
<div class="a bl" style="left:389px;top:910.6999999999999px;font-size:16.8px;line-height:28px;color:#555;letter-spacing:-0.1857px">重大遗漏，并承担个别和连带的法律责任。公司负责人王瑞庆、主管会计工作负责人李艳林及会计机构负责人(会计主管人员)李艳林声明：保证本年度报告中财务报告的真实、准确、完整。所有董事均已出席了审议本报告的董事会会议。报告</div>
<div class="a bl" style="left:389px;top:933.3px;font-size:16.8px;line-height:28px;color:#555;letter-spacing:-0.1553px">期内，公司实现归属于上市公司股东的净利润亏损46,607.62万元，亏损幅度较上年同期收窄7.09%，主要原因为：一、报告期内公司主要产品三元材料销量较同期增长34.68%，但受主要原材料锂源价格大幅下跌影响，售价较同期下降40.5…</div>
<div class="a" style="left:389px;top:970.2px;font-size:14.4px;line-height:20px;color:#a0a0a0">定期报告的更正<span style="display:inline-block;width:2px;height:11px;background:#777;margin:0 6px 0 8px;vertical-align:-1px"></span>2026-02-13</div>
<div class="a" style="left:2127px;top:970.2px;font-size:14.4px;line-height:20px;color:#999">折叠</div>
<svg class="a" style="left:2160px;top:973.2px" width="17" height="14" viewBox="0 0 17 14" fill="none" stroke="#999" stroke-width="1.3"><path d="M1.5 7.5 L8.5 1.5 L15.5 7.5"/><path d="M1.5 12.5 L8.5 6.5 L15.5 12.5"/></svg>
<div class="a adj" style="left:376.3px;top:1001.0px;font-size:16.8px;line-height:28px;color:#333"><b>【相邻】</b><span style="margin-left:7px;letter-spacing:-0.19px">天力锂能：天力锂能集团股份有限公司关于股东<span class="org">减持</span>计划期限届满暨实施结果的公告</span></div>
<div class="a" style="left:2076px;top:1006.0px;width:100px;text-align:right;font-size:14.4px;line-height:20px;color:#999">2026-02-04</div>
<div class="a" style="left:360px;top:1033.5px;width:1816px;height:1px;background:#e8e8e8"></div>
<div class="a box" style="left:360px;top:1055.0px;width:16.6px;height:16.6px;border-color:#d0d0d0;border-radius:2.5px"></div>
<div class="a" style="left:389.3px;top:1055.0px;width:23.4px;height:23.6px;border:1px solid #f8aea4;border-radius:3px;color:#f59c8e;font-size:13.4px;line-height:25px;text-align:center">C</div>
<div class="a" style="left:422.3px;top:1055.0px;width:80.4px;height:23.6px;border:1px solid #fcd7a8;border-radius:4px;color:#333;font-size:16.8px;line-height:22px;text-align:center">301152</div>
<div class="a tt" style="left:517.5px;top:1053.4px;font-size:16.8px;line-height:28px;font-weight:bold;color:#333;letter-spacing:-0.15px">天力锂能：天力锂能集团股份有限公司2025年半<span class="org">年度报告</span>摘要（更正后）</div>
<div class="a bl" style="left:389px;top:1084.8px;font-size:16.8px;line-height:28px;color:#555;letter-spacing:-0.1550px">证券代码：301152证券简称：天力锂能公告编号：2025-078天力锂能集团股份有限公司2025年半年度报告摘要一、重要提示本半年度报告摘要来自半年度报告全文，为全面了解本公司的经营成果、财务状况及未来发展规划，投资者应当到证</div>
<div class="a bl" style="left:389px;top:1107.6px;font-size:16.8px;line-height:28px;color:#555;letter-spacing:-0.1246px">监会指定媒体仔细阅读半年度报告全文。所有董事均已出席了审议本报告的董事会会议。非标准审计意见提示□适用√不适用董事会审议的报告期利润分配预案或公积金转增股本预案□适用√不适用公司计划不派发现金红利，不送红股，不以公</div>
<div class="a bl" style="left:389px;top:1130.3px;font-size:16.8px;line-height:28px;color:#555;letter-spacing:-0.1367px">积金转增股本。董事会决议通过的本报告期优先股利润分配预案□适用√不适用二、公司基本情况1、公司简介股票简称天力锂能股票代码301152股票上市交易所深圳证券交易所</div>
<div class="a" style="left:2190px;top:672px;width:29px;height:43px;background:#7f7f7f;box-shadow:-2px 0 6px rgba(0,0,0,.15)"></div>
<svg class="a" style="left:2196px;top:682px" width="18" height="24" viewBox="0 0 18 24" fill="none" stroke="#fff" stroke-width="2.3"><path d="M14 2.5 L4 12 L14 21.5"/></svg>
<div class="a" style="left:2212px;top:500px;width:8px;height:652px;background:linear-gradient(90deg,rgba(0,0,0,0),rgba(0,0,0,.08))"></div>
<div class="a" style="left:2219px;top:505.5px;width:1.5px;height:371.5px;background:#9a9a9a"></div>
<div class="a" style="left:1839.5px;top:1025.5px;font-size:31px;line-height:40px;color:rgba(125,125,125,.5);letter-spacing:0.55px">激活 Windows</div>
<div class="a" style="left:1839px;top:1065px;font-size:21.5px;line-height:30px;color:rgba(125,125,125,.5)"><span style="letter-spacing:0.5px">转到“设置”以激活</span> <span style="letter-spacing:1.7px">Windows</span>。</div>
<div class="a" style="left:2160px;top:1053px;width:55px;height:55px;border-radius:50%;background:#fff;box-shadow:0 1px 6px rgba(0,0,0,.15)"></div>
<svg class="a" style="left:2170px;top:1063px" width="34" height="34" viewBox="0 0 34 34" fill="#111"><path d="M13 5 H21 V15 H26.5 L17 25 L7.5 15 H13 Z"/><rect x="6" y="27.5" width="22" height="2.6"/></svg>
<svg class="a" style="left:0;top:0;z-index:50" width="2229" height="1152"><path fill-rule="evenodd" fill="#f7f7f7" d="M0 0H2229V1152H0Z M8.5 0.5H2220.5A8 8 0 0 1 2228.5 8.5V1143.5A8 8 0 0 1 2220.5 1151.5H8.5A8 8 0 0 1 0.5 1143.5V8.5A8 8 0 0 1 8.5 0.5Z"/><path d="M8.5 1151.5A8 8 0 0 1 0.5 1143.5V8.5A8 8 0 0 1 8.5 0.5H2220.5A8 8 0 0 1 2228.5 8.5V1143.5A8 8 0 0 1 2220.5 1151.5" fill="none" stroke="rgba(120,120,120,.35)" stroke-width="1"/></svg>
</body></html>
